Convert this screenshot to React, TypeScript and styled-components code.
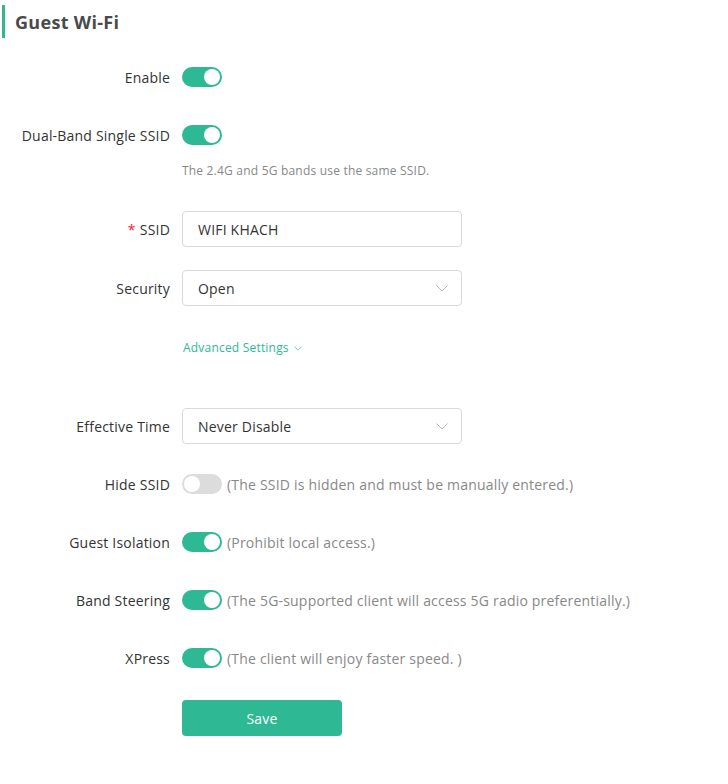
import React from "react";
import styled, { createGlobalStyle } from "styled-components";

const Global = createGlobalStyle`
  html, body { margin: 0; padding: 0; background: #fff; }
  body { font-family: "Open Sans", "Noto Sans", sans-serif; font-size: 14px; color: #333; letter-spacing: 0.2px; }
  * { box-sizing: border-box; }
`;

const GREEN = "#2eb994";

const Page = styled.div`
  width: 728px;
  padding-top: 5px;
`;

const Title = styled.h2`
  margin: 0 0 21px 2px;
  height: 33px;
  border-left: 3px solid ${GREEN};
  padding-left: 10px;
  display: flex;
  align-items: center;
  font-size: 18px;
  font-weight: 700;
  color: #4a4a4a;
  letter-spacing: 0.3px;
`;

const Item = styled.div<{ $mb?: number }>`
  display: grid;
  grid-template-columns: 170px 1fr;
  column-gap: 12px;
  margin-bottom: ${(p) => p.$mb ?? 22}px;
`;

const Label = styled.div`
  height: 36px;
  display: flex;
  align-items: center;
  justify-content: flex-end;
  color: #333;
  white-space: nowrap;
`;

const Req = styled.span`
  color: #f5222d;
  margin-right: 4px;
`;

const Control = styled.div`
  display: flex;
  flex-direction: column;
`;

const Line = styled.div`
  height: 36px;
  display: flex;
  align-items: center;
  gap: 5px;
`;

const Switch = styled.span<{ $on: boolean }>`
  position: relative;
  width: 40px;
  height: 20px;
  border-radius: 10px;
  background: ${(p) => (p.$on ? GREEN : "#dcdcdc")};
  flex: none;
  &::after {
    content: "";
    position: absolute;
    top: 2px;
    left: ${(p) => (p.$on ? "22px" : "2px")};
    width: 16px;
    height: 16px;
    border-radius: 50%;
    background: #fff;
  }
`;

const Note = styled.span`
  color: #888;
  white-space: nowrap;
`;

const Help = styled.div`
  font-size: 12px;
  line-height: 18px;
  color: #888;
  margin: 9px 0;
`;

const Field = styled.div`
  width: 280px;
  height: 36px;
  border: 1px solid #d9d9d9;
  border-radius: 4px;
  display: flex;
  align-items: center;
  justify-content: space-between;
  padding: 0 13px 0 15px;
  color: #333;
`;

const Adv = styled.div`
  padding: 12px 0 0 1px;
  line-height: 18px;
  font-size: 12px;
  color: ${GREEN};
  display: flex;
  align-items: center;
  gap: 5px;
`;

const SaveBtn = styled.button`
  width: 160px;
  height: 36px;
  border: none;
  border-radius: 4px;
  background: ${GREEN};
  color: #fff;
  font-family: inherit;
  font-size: 14px;
  font-weight: 500;
  letter-spacing: 0.2px;
`;

const Chevron = ({ size = 12, color = "#bbb" }: { size?: number; color?: string }) => (
  <svg width={size} height={size / 2 + 1} viewBox="0 0 12 7" fill="none">
    <path d="M0.5 0.5 L6 6 L11.5 0.5" stroke={color} strokeWidth="1" />
  </svg>
);

const ToggleRow = ({
  label,
  on,
  note,
  help,
  mb,
}: {
  label: string;
  on: boolean;
  note?: string;
  help?: string;
  mb?: number;
}) => (
  <Item $mb={mb}>
    <Label>{label}</Label>
    <Control>
      <Line>
        <Switch $on={on} />
        {note && <Note>{note}</Note>}
      </Line>
      {help && <Help>{help}</Help>}
    </Control>
  </Item>
);

export default function App() {
  return (
    <Page>
      <Global />
      <Title>Guest Wi-Fi</Title>
      <ToggleRow label="Enable" on />
      <ToggleRow label="Dual-Band Single SSID" on help="The 2.4G and 5G bands use the same SSID." />
      <Item $mb={23}>
        <Label>
          <Req>*</Req>SSID
        </Label>
        <Field>WIFI KHACH</Field>
      </Item>
      <Item $mb={21}>
        <Label>Security</Label>
        <Field>
          Open
          <Chevron />
        </Field>
      </Item>
      <Item $mb={51}>
        <div />
        <Adv>
          Advanced Settings
          <Chevron size={8} color={GREEN} />
        </Adv>
      </Item>
      <Item>
        <Label>Effective Time</Label>
        <Field>
          Never Disable
          <Chevron />
        </Field>
      </Item>
      <ToggleRow label="Hide SSID" on={false} note="(The SSID is hidden and must be manually entered.)" />
      <ToggleRow label="Guest Isolation" on note="(Prohibit local access.)" />
      <ToggleRow label="Band Steering" on note="(The 5G-supported client will access 5G radio preferentially.)" />
      <ToggleRow label="XPress" on note="(The client will enjoy faster speed. )" mb={24} />
      <Item>
        <div />
        <Line>
          <SaveBtn>Save</SaveBtn>
        </Line>
      </Item>
    </Page>
  );
}
